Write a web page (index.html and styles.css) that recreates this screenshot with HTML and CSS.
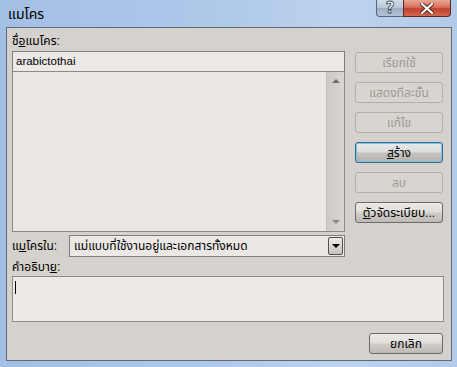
FILE: index.html
```html
<!DOCTYPE html>
<html>
<head>
<meta charset="utf-8">
<title>แมโคร</title>
	<link rel="stylesheet" href="styles.css">
</head>
<body>
	<div class="window">
		<div class="titlebar">
			<span class="title">แมโคร</span>
			<div class="caption">
				<span class="cap-btn help">?</span>
				<span class="cap-btn close">
					<svg width="14" height="11" viewBox="0 0 14 11">
						<path d="M2 1 L12 10 M12 1 L2 10" stroke="#4a2a24" stroke-width="4" stroke-linecap="square"/>
						<path d="M2 1 L12 10 M12 1 L2 10" stroke="#ffffff" stroke-width="2.2" stroke-linecap="square"/>
					</svg>
				</span>
			</div>
		</div>

		<div class="client">
			<div class="top">
				<div class="left">
					<div class="label name-label">ชื่<u>อ</u>แมโคร:</div>
					<div class="field name">arabictothai</div>
					<div class="list">
						<div class="list-body"></div>
						<div class="vscroll">
							<span class="arrow up"></span>
							<span class="arrow down"></span>
						</div>
					</div>
					<div class="macro-in">
						<span class="label in-label">แ<u>ม</u>โครใน:</span>
						<div class="select">
							<span class="select-text">แม่แบบที่ใช้งานอยู่และเอกสารทั้งหมด</span>
							<span class="drop"><span class="tri"></span></span>
						</div>
					</div>
				</div>

				<div class="buttons">
					<button class="btn" disabled>เรียกใช้</button>
					<button class="btn" disabled>แสดงทีละขั้น</button>
					<button class="btn" disabled>แก้ไข</button>
					<button class="btn active default"><u>ส</u>ร้าง</button>
					<button class="btn" disabled>ลบ</button>
					<button class="btn active"><u>ตั</u>วจัดระเบียบ...</button>
				</div>
			</div>

			<div class="label desc-label">คำอธิบา<u>ย</u>:</div>
			<div class="field desc"><span class="caret"></span></div>

			<div class="footer">
				<button class="btn active cancel">ยกเลิก</button>
			</div>
		</div>
	</div>
</body>
</html>
```

FILE: styles.css
```css
body {
	margin: 0;
	padding: 0;
	font-family: Tahoma, "Liberation Sans", "Noto Sans Thai", "Noto Sans Thai UI", Loma, Garuda, "DejaVu Sans", sans-serif;
	font-size: 12px;
	color: #000;
}
.window {
	width: 457px;
	height: 367px;
	box-sizing: border-box;
	padding: 0 5px 6px 6px;
	display: flex;
	flex-direction: column;
	background: linear-gradient(to right, #a3bfe3 0%, #aec8ea 45%, #bdd3ee 75%, #b2cbea 100%);
}
.titlebar {
	height: 27px;
	display: flex;
	align-items: flex-start;
	flex-shrink: 0;
}
.title {
	padding: 5px 0 0 2px;
	font-size: 14px;
	line-height: 18px;
}
.caption {
	margin-left: auto;
	margin-right: 1px;
	display: flex;
}
.cap-btn {
	height: 17px;
	box-sizing: border-box;
	display: flex;
	align-items: center;
	justify-content: center;
	border: 1px solid #55657b;
	border-top: none;
}
.help {
	width: 27px;
	border-right: none;
	border-bottom-left-radius: 4px;
	background: linear-gradient(#d2dce8 0%, #b9c7d8 48%, #9dadc2 52%, #b4c2d4 100%);
	color: #f2f5f9;
	font-family: "DejaVu Sans", sans-serif;
	font-size: 15px;
	font-weight: bold;
	line-height: 16px;
	-webkit-text-stroke: 0.8px #3a4759;
}
.close {
	width: 48px;
	border-color: #5c2a22;
	border-bottom-right-radius: 4px;
	background: linear-gradient(#e8a898 0%, #d8705c 45%, #c0402b 55%, #d46650 100%);
}
.client {
	flex: 1;
	border: 1px solid #5f6b7b;
	background: #d5d1cc;
	padding: 0 7px 0 5px;
	display: flex;
	flex-direction: column;
}
.top {
	display: flex;
}
.left {
	width: 333px;
	display: flex;
	flex-direction: column;
}
.label {
	line-height: 17px;
}
.name-label {
	height: 23px;
	box-sizing: border-box;
	padding-top: 5px;
}
.field {
	box-sizing: border-box;
	border: 1px solid #7d7d7d;
	background: #ece9e6;
}
.name {
	height: 21px;
	padding-left: 3px;
	font-size: 11.5px;
	line-height: 19px;
}
.list {
	height: 161px;
	margin-top: -1px;
	box-sizing: border-box;
	border: 1px solid #8a8a8a;
	background: #ebe8e4;
	display: flex;
}
.list-body {
	flex: 1;
}
.vscroll {
	width: 17px;
	background: linear-gradient(to right, #cdcac6, #d9d6d2);
	border-left: 1px solid #c4c1bd;
	display: flex;
	flex-direction: column;
	justify-content: space-between;
	align-items: center;
	padding: 7px 0 7px;
}
.arrow {
	width: 0;
	height: 0;
	border-left: 4px solid transparent;
	border-right: 4px solid transparent;
}
.arrow.up {
	border-bottom: 4px solid #6e6e6e;
}
.arrow.down {
	border-top: 4px solid #8a8a8a;
}
.macro-in {
	display: flex;
	align-items: center;
	margin-top: 3px;
}
.in-label {
	width: 57px;
	flex-shrink: 0;
}
.select {
	flex: 1;
	height: 22px;
	box-sizing: border-box;
	border: 1px solid #7d7d7d;
	background: #ebe8e5;
	display: flex;
	align-items: center;
	padding: 0 1px 0 4px;
}
.select-text {
	flex: 1;
}
.drop {
	width: 15px;
	height: 18px;
	box-sizing: border-box;
	border: 1px solid #505050;
	border-radius: 2px;
	background: linear-gradient(#eeeeee, #c4c1bd);
	display: flex;
	align-items: center;
	justify-content: center;
}
.tri {
	width: 0;
	height: 0;
	border-left: 4px solid transparent;
	border-right: 4px solid transparent;
	border-top: 4px solid #000;
}
.buttons {
	margin-left: 10px;
	width: 88px;
	padding-top: 24px;
	display: flex;
	flex-direction: column;
	gap: 9px;
}
.btn {
	height: 21px;
	width: 88px;
	box-sizing: border-box;
	padding: 0;
	font-family: inherit;
	font-size: 12px;
	border-radius: 3px;
	border: 1px solid #acb0b3;
	background: #d8d5d0;
	color: #9c9a98;
}
.btn.active {
	border-color: #6a6a6a;
	color: #000;
	background: linear-gradient(#ebe9e6 0%, #e2dfdb 45%, #cfcbc6 55%, #bfbab5 100%);
}
.btn.default {
	border-color: #2f6a96;
	box-shadow: inset 0 0 0 1px #7fc1e4;
	background: linear-gradient(#e6e9ea 0%, #dbdedf 45%, #c4c2be 55%, #b6b2ad 100%);
}
.desc-label {
	height: 19px;
	box-sizing: border-box;
	padding-top: 2px;
}
.desc {
	height: 46px;
	border-color: #8b8b8b;
	padding: 4px 0 0 2px;
}
.caret {
	display: block;
	width: 1px;
	height: 13px;
	background: #000;
}
.footer {
	display: flex;
	justify-content: flex-end;
	padding: 11px 1px 0 0;
}
.cancel {
	width: 74px;
}
```
